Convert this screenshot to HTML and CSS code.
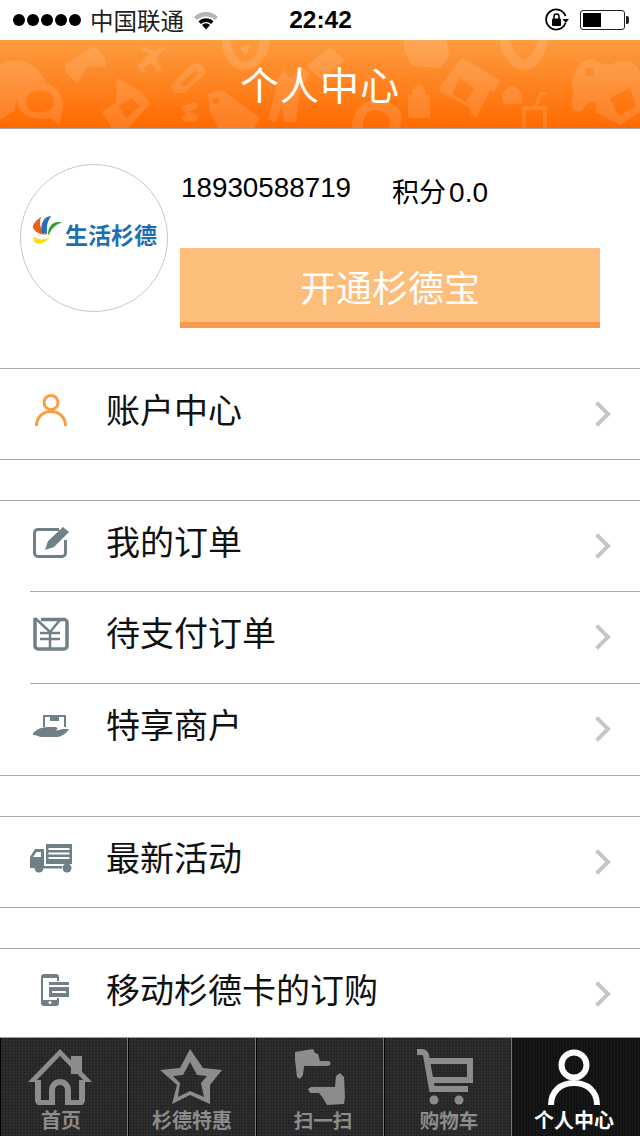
FILE: index.html
```html
<!DOCTYPE html>
<html lang="zh-CN">
<head>
    <meta charset="UTF-8">
    <meta name="viewport" content="width=device-width, initial-scale=1.0">
    <title>个人中心</title>
    <link rel="stylesheet" href="styles.css">
</head>
<body>
    <div class="status-bar">
        <div class="status-left">
            <span class="signal"><i></i><i></i><i></i><i></i><i></i></span>
            <span class="carrier">中国联通</span>
            <svg class="wifi" width="24" height="20" viewBox="0 0 24 20">
                <path d="M0 7 A17 17 0 0 1 24 7 L21 10 A13 13 0 0 0 3 10 Z" fill="#b5b5b5"/>
                <path d="M4.500 11.500 A10.500 10.500 0 0 1 19.500 11.500 L17 14 A7 7 0 0 0 7 14 Z" fill="#000"/>
                <path d="M8 15 A5.500 5.500 0 0 1 16 15 L12 19.500 Z" fill="#000"/>
            </svg>
        </div>
        <div class="status-time">22:42</div>
        <div class="status-right">
            <svg width="24" height="24" viewBox="0 0 24 24">
                <path d="M20.500 15 A10 10 0 1 1 20.500 8" fill="none" stroke="#000" stroke-width="1.800"/>
                <path d="M17.500 11 L24 11 L20.800 15 Z" fill="#000"/>
                <rect x="7" y="10.500" width="9" height="7.500" rx="1" fill="#000"/>
                <path d="M9 11 V8.500 A2.500 2.500 0 0 1 14 8.500 V11" fill="none" stroke="#000" stroke-width="1.500"/>
            </svg>
            <div class="battery"><div class="battery-level"></div></div>
        </div>
    </div>

    <header class="title-bar">
        <svg class="title-pattern" width="640" height="88" viewBox="0 0 640 88" fill="#fff">
            <g opacity="0.12">
                <!-- bubbles -->
                <path d="M0 24 C14 16 36 20 46 42 C30 40 16 52 15 70 L0 80 Z"/>
                <path d="M40 42 C54 42 63 54 63 66 L60 85 L50 78 C32 82 16 72 17 60 C18 50 28 42 40 42 Z M40 50 C32 50 26 54 26 62 C26 70 34 74 42 72 C50 72 55 66 54 60 C53 54 48 50 40 50 Z" fill-rule="evenodd"/>
                <!-- game pad -->
                <path d="M65 24 L93 7 C102 10 107 20 106 27 L88 26 L78 43 C70 38 64 32 65 24 Z"/>
                <!-- plane -->
                <path d="M166 7 L156 18 L162 30 L158 32 L150 23 L144 28 L146 33 L142 32 L137 26 L142 22 L150 14 L140 10 L144 7 L155 11 Z"/>
                <!-- link -->
                <path d="M172 44 L192 24 C200 22 207 28 205 34 L184 53 C176 54 170 50 172 44 Z M180 44 L196 30 L199 34 L184 47 Z" fill-rule="evenodd"/>
                <!-- wallet -->
                <path d="M102 72 L116 62 L117 38 L142 52 L150 64 L128 88 L112 88 Z M118 66 L132 58 L140 66 L126 78 Z" fill-rule="evenodd"/>
                <!-- swirl -->
                <path d="M182 66 L196 62 L198 68 L188 72 L198 75 L196 81 L186 82 L181 78 L186 74 Z"/>
                <!-- tag -->
                <path d="M208 54 L222 50 L260 78 L254 88 L218 88 L210 72 Z M216 58 A3 3 0 1 0 216 64 A3 3 0 1 0 216 58 Z" fill-rule="evenodd"/>
                <!-- compass -->
                <path d="M222 0 H269 C270 16 258 30 245 30 C232 30 221 16 222 0 Z M231 0 C231 12 238 22 245 22 C252 22 260 12 260 0 Z" fill-rule="evenodd"/>
                <path d="M240 8 L250 4 L246 16 Z"/>
                <!-- person -->
                <path d="M278 38 L284 30 L290 38 L302 27 L310 34 L300 50 L296 82 L284 82 L282 64 L276 82 L268 80 L276 48 Z"/>
                <!-- film -->
                <path d="M306 26 L330 8 L345 20 L322 40 Z"/>
                <!-- at sign -->
                <path d="M376 60 C390 60 402 68 402 78 L400 88 L352 88 C352 72 362 60 376 60 Z M376 70 C368 70 363 76 363 84 C363 86 363 87 364 88 H388 C390 86 391 84 390 80 C388 74 382 70 376 70 Z" fill-rule="evenodd"/>
                <!-- bag -->
                <path d="M408 55 H412 C412 49 415 45 419 45 C423 45 426 49 426 55 H430 V78 H408 Z"/>
                <!-- basket -->
                <path d="M404 0 H446 L449 14 L441 28 L412 26 L404 10 Z"/>
                <!-- shop -->
                <path d="M439 48 L462 18 L500 40 L494 52 L490 50 L476 78 L471 74 L470 68 L447 55 L441 53 Z M452 54 L466 62 L474 48 L460 38 Z" fill-rule="evenodd"/>
                <!-- pen -->
                <path d="M500 0 H547 C548 14 536 30 524 30 C512 30 500 14 500 0 Z M510 0 C512 10 518 18 524 20 C530 18 536 10 538 0 Z" fill-rule="evenodd"/>
                <!-- drink -->
                <path d="M508 66 A10 10 0 1 1 522 58 L522 64 H508 Z"/>
                <path d="M522 66 H547 V88 H522 Z M526 70 V88 H543 V70 Z" fill-rule="evenodd"/>
                <path d="M534 66 L540 52 H546 V55 L542 55 L538 66 Z"/>
                <!-- palette -->
                <path d="M574 52 C570 44 572 28 586 20 C598 16 600 28 612 24 C626 18 640 22 640 36 V72 L620 85 L595 72 C600 60 590 58 582 70 C574 76 568 64 574 52 Z M590 28 A4 4 0 1 0 590 36 A4 4 0 1 0 590 28 Z M610 58 L630 48 L636 66 L618 76 Z" fill-rule="evenodd"/>
            </g>
        </svg>
        <h1>个人中心</h1>
    </header>

    <main class="content">
        <section class="profile">
            <div class="avatar">
                <svg width="32" height="32" viewBox="0 0 40 36">
                    <path d="M1 14 C2 8 8 4 12 1 C8 8 10 18 18 24 C10 24 2 20 1 14 Z" fill="#e8601c"/>
                    <path d="M12 21 C10 10 16 0 24 1 C19 6 18 14 19 23 Z" fill="#2a6fb5"/>
                    <path d="M20 24 C20 12 28 5 38 9 C30 10 25 16 21 24 Z" fill="#2f9e3a"/>
                    <path d="M1 25 C6 31 16 31 22 27 C18 34 8 38 3 33 Z" fill="#f7e10a"/>
                </svg>
                <span class="avatar-name">生活杉德</span>
            </div>
            <div class="profile-info">
                <div class="profile-line">
                    <span class="phone">18930588719</span>
                    <span class="points">积分<span class="points-value">0.0</span></span>
                </div>
                <button class="open-btn">开通杉德宝</button>
            </div>
        </section>

        <ul class="menu-group">
            <li class="menu-row">
                <svg class="menu-icon" width="44" height="40" viewBox="0 0 44 40" fill="none" stroke="#fc9d3f" stroke-width="3">
                    <circle cx="22" cy="12.500" r="7"/>
                    <path d="M7.500 36 C7.500 27 14 21.500 22 21.500 C30 21.500 36.500 27 36.500 36"/>
                </svg>
                <span class="menu-label">账户中心</span>
                <span class="chevron"></span>
            </li>
        </ul>

        <ul class="menu-group">
            <li class="menu-row">
                <svg class="menu-icon" width="44" height="40" viewBox="0 0 44 40" fill="#6f8087">
                    <path d="M30 7.500 H9 A3.500 3.500 0 0 0 5.500 11 V31 A3.500 3.500 0 0 0 9 34.500 H33 A3.500 3.500 0 0 0 36.500 31 V18" fill="none" stroke="#6f8087" stroke-width="3"/>
                    <path d="M34 5 L40 10 L25 25 L16 28 L19 19 Z"/>
                </svg>
                <span class="menu-label">我的订单</span>
                <span class="chevron"></span>
            </li>
            <li class="menu-row inset">
                <svg class="menu-icon" width="44" height="40" viewBox="0 0 44 40" fill="none" stroke="#6f8087" stroke-width="3.500">
                    <path d="M12 6.500 H35 A3 3 0 0 1 38 9.500 V33 A3 3 0 0 1 35 36 H9 A3 3 0 0 1 6 33 V5"/>
                    <path d="M6 5 L21 19 L31 7 M11 20 H31 M11 26 H31 M21 19 V36" stroke-width="2.500"/>
                </svg>
                <span class="menu-label">待支付订单</span>
                <span class="chevron"></span>
            </li>
            <li class="menu-row inset">
                <svg class="menu-icon" width="44" height="40" viewBox="0 0 44 40" fill="#6f8087">
                    <path d="M15 22 V11 H36 V22" fill="none" stroke="#6f8087" stroke-width="2"/>
                    <rect x="21" y="10" width="9" height="6"/>
                    <path d="M4 28 C8 24 13 22 18 22 H27 C29 23 29 25 26 26 L34 24 H40 C38 28 33 31 29 32 H13 C10 32 8 30 4 30 Z"/>
                </svg>
                <span class="menu-label">特享商户</span>
                <span class="chevron"></span>
            </li>
        </ul>

        <ul class="menu-group">
            <li class="menu-row">
                <svg class="menu-icon" width="44" height="40" viewBox="0 0 44 40" fill="#6f8087">
                    <path d="M1 30 V19 L6 11 H15 V30 Z M4 19 H12 V14 H7.500 Z" fill-rule="evenodd"/>
                    <path d="M17 6 H43 V26 H17 Z M19.500 10 V12 H40.500 V10 Z M19.500 14.500 V16.500 H40.500 V14.500 Z M19.500 19 V21 H40.500 V19 Z" fill-rule="evenodd"/>
                    <rect x="15" y="28" width="18" height="2.500"/>
                    <circle cx="10" cy="30" r="4.500"/>
                    <circle cx="38" cy="30" r="4.500"/>
                </svg>
                <span class="menu-label">最新活动</span>
                <span class="chevron"></span>
            </li>
        </ul>

        <ul class="menu-group last">
            <li class="menu-row">
                <svg class="menu-icon" width="44" height="40" viewBox="0 0 44 40" fill="#6f8087">
                    <path d="M15 4 H27 A3 3 0 0 1 30 7 V11 H28 V8 H14 V30 H28 V28 H30 V33 A3 3 0 0 1 27 36 H15 A3 3 0 0 1 12 33 V7 A3 3 0 0 1 15 4 Z M19.500 32.500 A1.500 1.500 0 1 0 22.500 32.500 A1.500 1.500 0 1 0 19.500 32.500 Z" fill-rule="evenodd"/>
                    <path d="M20 12 H40 V15 H20 Z M20 17 H40 V27 H20 Z M23 21 V23 H37 V21 Z" fill-rule="evenodd"/>
                </svg>
                <span class="menu-label">移动杉德卡的订购</span>
                <span class="chevron"></span>
            </li>
        </ul>
    </main>

    <nav class="tab-bar">
        <div class="tab tab-home">
            <svg width="68" height="58" viewBox="0 0 68 58" fill="none" stroke="#8c8c8c">
                <path d="M11 33 V53 A3 3 0 0 0 14 56 H25 V43 A8 8 0 0 1 41 43 V56 H52 A3 3 0 0 0 55 53 V33" stroke-width="6"/>
                <path d="M1 35 L33 2 L65 35 H58 L33 9 L8 35 Z" fill="#8c8c8c" stroke="none"/>
                <rect x="44" y="9" width="11" height="18" fill="#8c8c8c" stroke="none"/>
            </svg>
            <span class="tab-label">首页</span>
        </div>
        <div class="tab">
            <svg width="68" height="58" viewBox="0 0 68 58" fill="#8c8c8c">
                <path fill-rule="evenodd" d="M32 2 L45 21 L64 23 L52 38 L52 57 L32 48 L14 57 L19 38 L2 23 L22 21 Z M32 15 L25 28 L15 29 L22 36 L20 50 L32 44 L46 50 L43 36 L49 29 L39 28 Z"/>
            </svg>
            <span class="tab-label">杉德特惠</span>
        </div>
        <div class="tab tab-scan">
            <svg width="68" height="58" viewBox="0 0 68 58" fill="#8c8c8c">
                <path d="M9 5 L27 2 L29 6 L32 7 L34 14 H43 L45 17 L42 19 H18 L17 28 L14 32 L11 30 L9 13 Z"/>
                <path d="M22 42 L25 40 H49 L50 29 L54 26 L58 30 L59 50 L58 57 L41 58 L37 51 L33 46 H24 Z"/>
            </svg>
            <span class="tab-label">扫一扫</span>
        </div>
        <div class="tab tab-cart">
            <svg width="68" height="58" viewBox="0 0 68 58" fill="none" stroke="#8c8c8c" stroke-width="6">
                <path d="M3 5 H8 C10 5 11 6 12 8 L18 42 H54"/>
                <path d="M13 14 H56 V33 H16"/>
                <circle cx="20" cy="53" r="4.500" fill="#8c8c8c" stroke="none"/>
                <circle cx="45" cy="53" r="4.500" fill="#8c8c8c" stroke="none"/>
            </svg>
            <span class="tab-label">购物车</span>
        </div>
        <div class="tab tab-user active">
            <svg width="68" height="58" viewBox="0 0 68 58" fill="none" stroke="#fff" stroke-width="6">
                <circle cx="32" cy="18" r="12.500"/>
                <path d="M9 58 C9 44 19 36 32 36 C45 36 55 44 55 58"/>
            </svg>
            <span class="tab-label">个人中心</span>
        </div>
    </nav>
</body>
</html>
```

FILE: styles.css
```css
* {
    box-sizing: border-box;
}

body {
    margin: 0;
    width: 640px;
    height: 1136px;
    overflow: hidden;
    display: flex;
    flex-direction: column;
    background-color: #fff;
    font-family: 'Liberation Sans', 'Noto Sans CJK SC', sans-serif;
    color: #000;
}

ul {
    list-style: none;
    margin: 0;
    padding: 0;
}

/* status bar */
.status-bar {
    height: 40px;
    flex: none;
    display: grid;
    grid-template-columns: 1fr auto 1fr;
    align-items: center;
    padding: 0 12px 0 13px;
}

.status-left {
    display: flex;
    align-items: center;
}

.signal {
    display: flex;
    gap: 2px;
}

.signal i {
    width: 12px;
    height: 12px;
    border-radius: 50%;
    background-color: #000;
}

.carrier {
    margin-left: 9px;
    font-size: 23.5px;
    color: #222;
}

.wifi {
    margin-left: 10px;
}

.status-time {
    font-size: 24.5px;
    font-weight: bold;
}

.status-right {
    display: flex;
    justify-content: flex-end;
    align-items: center;
    gap: 11px;
}

.battery {
    position: relative;
    width: 45px;
    height: 20px;
    margin-right: 3px;
    padding: 2px;
    border: 1px solid #222;
    border-radius: 3px;
}

.battery::after {
    content: "";
    position: absolute;
    right: -5px;
    top: 5px;
    width: 3px;
    height: 8px;
    background-color: #222;
    border-radius: 0 2px 2px 0;
}

.battery-level {
    width: 18px;
    height: 14px;
    background-color: #000;
}

/* title */
.title-bar {
    position: relative;
    height: 89px;
    flex: none;
    display: flex;
    align-items: center;
    justify-content: center;
    padding-bottom: 2px;
    overflow: hidden;
    background: linear-gradient(#fd9c40, #ff6a00);
    border-bottom: 1px solid #b0a59c;
}

.title-pattern {
    position: absolute;
    left: 0;
    top: 0;
}

.title-bar h1 {
    position: relative;
    margin: 0;
    font-size: 39px;
    font-weight: normal;
    letter-spacing: 1px;
    color: #fff;
}

/* profile */
.content {
    flex: 1;
    min-height: 0;
}

.profile {
    height: 239px;
    display: flex;
    padding: 35px 40px 0 20px;
    gap: 12px;
}

.avatar {
    width: 148px;
    height: 148px;
    flex: none;
    display: flex;
    align-items: center;
    gap: 1px;
    padding: 0 0 16px 11px;
    border: 1px solid #c8c8c8;
    border-radius: 50%;
}

.avatar svg {
    flex: none;
}

.avatar-name {
    margin-top: 8px;
    font-size: 23px;
    font-weight: bold;
    font-family: 'Noto Sans CJK SC', sans-serif;
    line-height: 1;
    white-space: nowrap;
    color: #1f6fad;
}

.profile-info {
    flex: 1;
}

.profile-line {
    height: 84px;
    display: flex;
    align-items: flex-start;
}

.phone {
    margin-left: 1px;
    font-size: 27.8px;
    line-height: 48px;
}

.points {
    margin: 5px 0 0 41px;
    font-size: 27px;
    line-height: 48px;
}

.points-value {
    margin-left: 3px;
    font-size: 28px;
}

.open-btn {
    display: block;
    width: 420px;
    height: 80px;
    padding: 1px 0 0;
    border: none;
    border-bottom: 6px solid #f7994d;
    background-color: #fdbe7b;
    color: #fff;
    font-family: inherit;
    font-size: 36px;
}

/* menu */
.menu-group {
    margin-bottom: 40px;
    border-top: 1px solid #adadad;
    border-bottom: 1px solid #adadad;
}

.menu-group.last {
    margin-bottom: 0;
    border-bottom: none;
}

.menu-row {
    position: relative;
    height: 90px;
    display: flex;
    align-items: center;
    padding-left: 29px;
}

.menu-row.inset {
    height: 92px;
}

.menu-row.inset::before {
    content: "";
    position: absolute;
    left: 30px;
    right: 0;
    top: 0;
    height: 1px;
    background-color: #adadad;
}

.menu-icon {
    flex: none;
    margin-bottom: 8px;
}

.menu-label {
    margin-left: 33px;
    padding-bottom: 12px;
    font-size: 34px;
    color: #111;
}

.chevron {
    position: absolute;
    right: 33px;
    top: 50%;
    width: 18px;
    height: 18px;
    margin-top: -9px;
    border-top: 4px solid #c4c7c9;
    border-right: 4px solid #c4c7c9;
    transform: rotate(45deg);
}

/* tab bar */
.tab-bar {
    height: 99px;
    flex: none;
    display: grid;
    grid-template-columns: repeat(5, 1fr);
    border-top: 1px solid #9a9a9a;
    background-color: #000;
}

.tab {
    display: flex;
    flex-direction: column;
    align-items: center;
    justify-content: space-between;
    padding-top: 9px;
    overflow: hidden;
    border-left: 1px solid #000;
    border-right: 1px solid #777;
    background-color: #2a2a2a;
    background-image:
        repeating-linear-gradient(0deg, rgba(0, 0, 0, 0.16) 0 1px, transparent 1px 3px),
        repeating-linear-gradient(90deg, rgba(255, 255, 255, 0.03) 0 1px, transparent 1px 3px);
}

.tab.active {
    border: none;
    background-color: #131313;
}

.tab-home {
    padding-right: 6px;
}

.tab-scan .tab-label {
    margin-left: 6px;
    font-size: 19.500px;
}

.tab-cart .tab-label {
    margin-left: 2px;
    font-size: 19.500px;
}

.tab-user .tab-label {
    margin-right: 4px;
}

.tab-label {
    height: 28px;
    font-size: 20px;
    line-height: 26px;
    font-weight: bold;
    white-space: nowrap;
    color: #8c8c8c;
}

.tab.active .tab-label {
    color: #fff;
}
```
